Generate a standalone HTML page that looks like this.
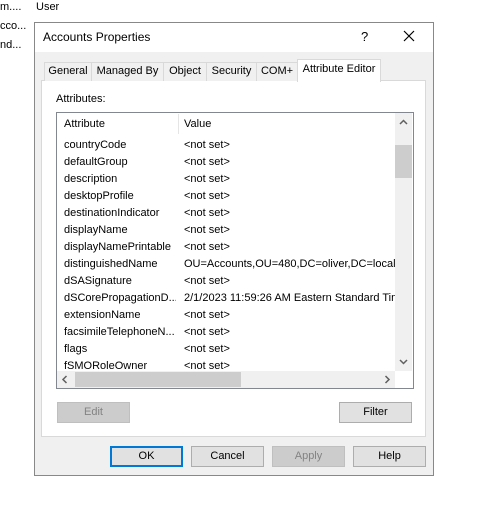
<!DOCTYPE html>
<html><head><style>
*{margin:0;padding:0;box-sizing:border-box}
body{width:490px;height:506px;background:#fff;position:relative;font-family:"Liberation Sans",sans-serif;font-size:11px;color:#000;overflow:hidden}
.a{position:absolute;white-space:nowrap}
.tab{position:absolute;top:62px;height:19px;border:1px solid #d9d9d9;border-bottom:none;background:#f0f0f0;text-align:center;line-height:17px}
.btn{position:absolute;height:21px;border:1px solid #adadad;background:#e1e1e1;text-align:center;line-height:19px}
.row{position:absolute;left:64px;height:17px}
</style></head><body>
<div class="a" style="left:0;top:1px">m....</div>
<div class="a" style="left:36px;top:1px">User</div>
<div class="a" style="left:0;top:20px">cco...</div>
<div class="a" style="left:0;top:39px">nd...</div>
<div class="a" style="left:34px;top:22px;width:400px;height:454px;border:1px solid #888;background:#f0f0f0"></div>
<div class="a" style="left:35px;top:23px;width:398px;height:29px;background:#fff"></div>
<div class="a" style="left:43px;top:30px;font-size:12px">Accounts Properties</div>
<div class="a" style="left:361px;top:29px;font-size:13px">?</div>
<svg class="a" style="left:403px;top:30px" width="12" height="12"><path d="M1 1L11 11M11 1L1 11" stroke="#000" stroke-width="1.2"/></svg>
<div class="a" style="left:41px;top:80px;width:385px;height:357px;background:#fff;border:1px solid #d9d9d9"></div>
<div class="tab" style="left:44px;width:48px">General</div>
<div class="tab" style="left:91px;width:73px">Managed By</div>
<div class="tab" style="left:163px;width:44px">Object</div>
<div class="tab" style="left:206px;width:51px">Security</div>
<div class="tab" style="left:256px;width:42px">COM+</div>
<div class="tab" style="left:297px;top:59px;height:23px;width:84px;background:#fff;line-height:19px">Attribute Editor</div>
<div class="a" style="left:56px;top:93px">Attributes:</div>
<div class="a" style="left:56px;top:112px;width:358px;height:277px;border:1px solid #828790;background:#fff"></div>
<div class="a" style="left:178px;top:114px;width:1px;height:20px;background:#e5e5e5"></div>
<div class="a" style="left:64px;top:118px">Attribute</div>
<div class="a" style="left:184px;top:118px">Value</div>
<div class="a" style="left:395px;top:113px;width:17px;height:258px;background:#f0f0f0"></div>
<div class="a" style="left:395px;top:145px;width:17px;height:33px;background:#cdcdcd"></div>
<svg class="a" style="left:395px;top:113px" width="17" height="258"><path d="M5 11L8.5 7.5L12 11M5 247L8.5 250.5L12 247" fill="none" stroke="#606060" stroke-width="1.5"/></svg>
<div class="a" style="left:57px;top:371px;width:338px;height:17px;background:#f0f0f0"></div>
<div class="a" style="left:75px;top:372px;width:166px;height:15px;background:#cdcdcd"></div>
<svg class="a" style="left:57px;top:371px" width="338" height="17"><path d="M9.5 5L6 8.5L9.5 12M328.5 5L332 8.5L328.5 12" fill="none" stroke="#606060" stroke-width="1.5"/></svg>
<div class="row" style="top:139px">countryCode</div><div class="a" style="left:184px;top:139px">&lt;not set&gt;</div>
<div class="row" style="top:156px">defaultGroup</div><div class="a" style="left:184px;top:156px">&lt;not set&gt;</div>
<div class="row" style="top:173px">description</div><div class="a" style="left:184px;top:173px">&lt;not set&gt;</div>
<div class="row" style="top:190px">desktopProfile</div><div class="a" style="left:184px;top:190px">&lt;not set&gt;</div>
<div class="row" style="top:207px">destinationIndicator</div><div class="a" style="left:184px;top:207px">&lt;not set&gt;</div>
<div class="row" style="top:224px">displayName</div><div class="a" style="left:184px;top:224px">&lt;not set&gt;</div>
<div class="row" style="top:241px">displayNamePrintable</div><div class="a" style="left:184px;top:241px">&lt;not set&gt;</div>
<div class="row" style="top:258px">distinguishedName</div><div class="a" style="left:184px;top:258px">OU=Accounts,OU=480,DC=oliver,DC=local</div>
<div class="row" style="top:275px">dSASignature</div><div class="a" style="left:184px;top:275px">&lt;not set&gt;</div>
<div class="row" style="top:292px;width:112px;overflow:hidden">dSCorePropagationD...</div><div class="a" style="left:184px;top:292px;width:211px;overflow:hidden">2/1/2023 11:59:26 AM Eastern Standard Time</div>
<div class="row" style="top:309px">extensionName</div><div class="a" style="left:184px;top:309px">&lt;not set&gt;</div>
<div class="row" style="top:326px">facsimileTelephoneN...</div><div class="a" style="left:184px;top:326px">&lt;not set&gt;</div>
<div class="row" style="top:343px">flags</div><div class="a" style="left:184px;top:343px">&lt;not set&gt;</div>
<div class="row" style="top:360px;height:11px;overflow:hidden">fSMORoleOwner</div><div class="a" style="left:184px;top:360px;height:11px;overflow:hidden">&lt;not set&gt;</div>
<div class="btn" style="left:57px;top:402px;width:73px;background:#ccc;border-color:#bfbfbf;color:#838383">Edit</div>
<div class="btn" style="left:339px;top:402px;width:73px">Filter</div>
<div class="btn" style="left:110px;top:446px;width:73px;border:2px solid #0078d7;line-height:17px">OK</div>
<div class="btn" style="left:191px;top:446px;width:73px">Cancel</div>
<div class="btn" style="left:272px;top:446px;width:73px;background:#ccc;border-color:#bfbfbf;color:#838383">Apply</div>
<div class="btn" style="left:353px;top:446px;width:73px">Help</div>
</body></html>
